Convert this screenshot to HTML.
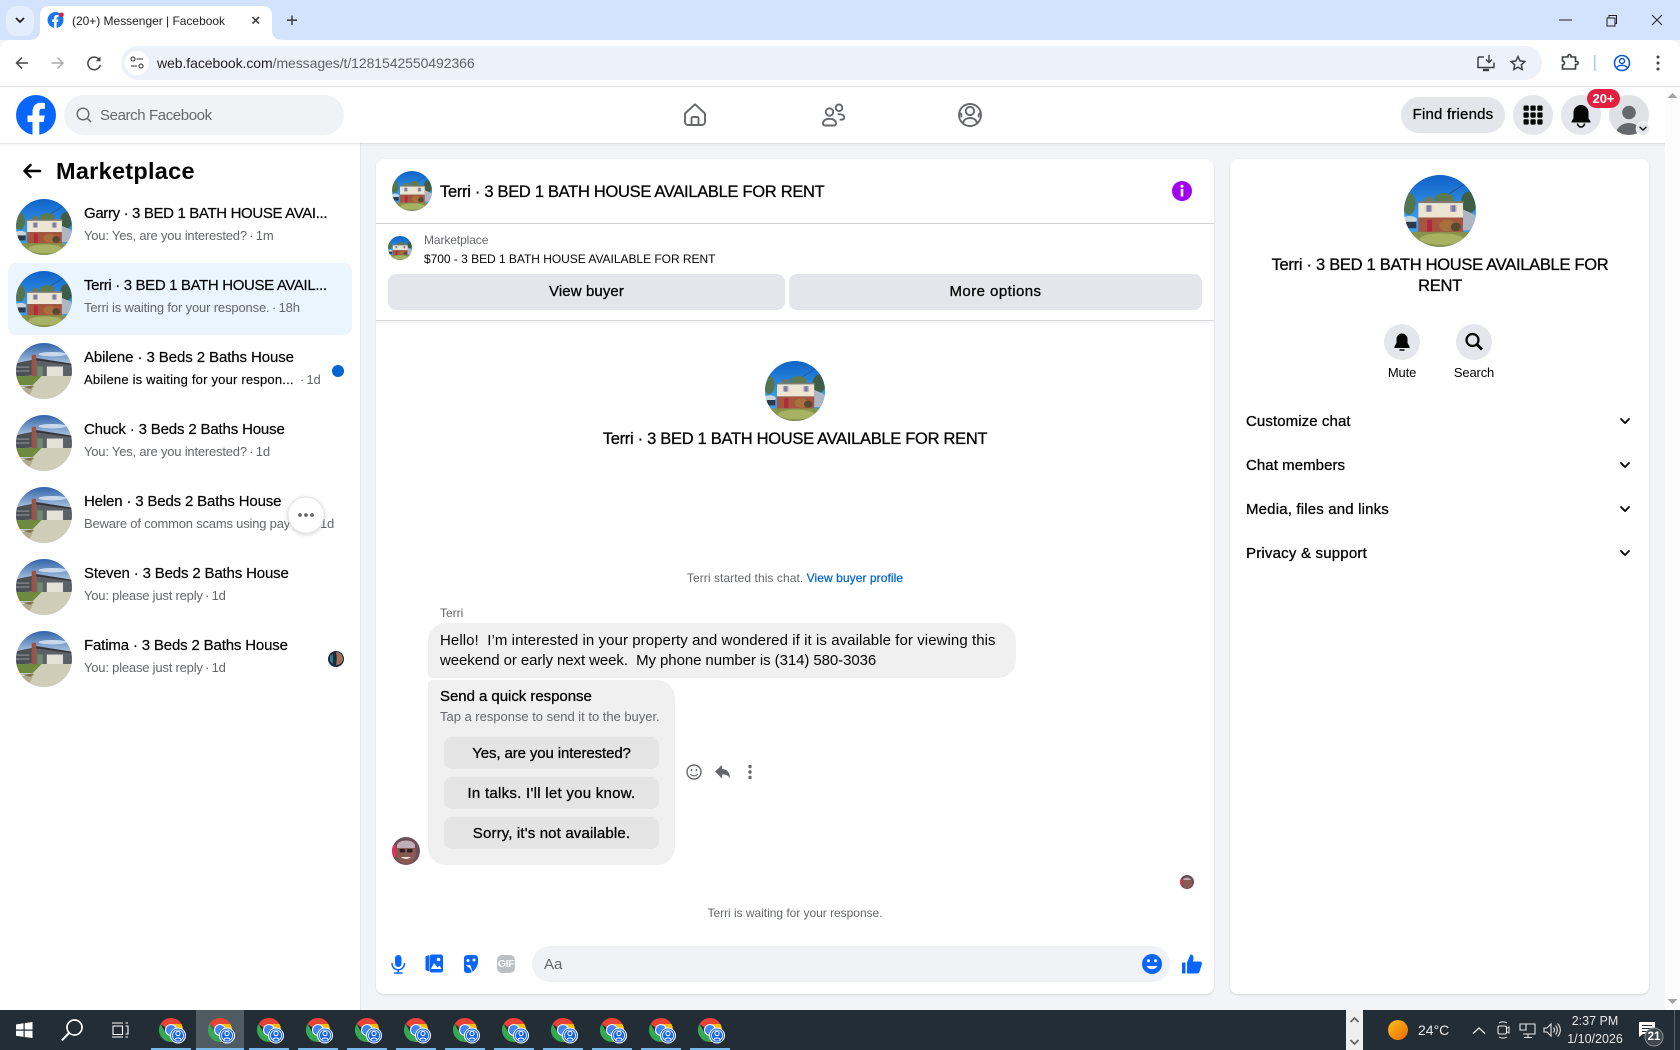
<!DOCTYPE html>
<html lang="en"><head><meta charset="utf-8"><title>(20+) Messenger | Facebook</title>
<style>
*{box-sizing:border-box}
html,body{margin:0;padding:0;width:1680px;height:1050px;overflow:hidden;background:#f2f4f7;font-family:"Liberation Sans",Arial,sans-serif;color:#050505}
svg.bg{position:absolute;left:0;top:0}
.t{position:absolute;white-space:nowrap;line-height:20px}
.c{transform:translateX(-50%)}
.g{color:#65676b}
.a{font-size:15px;letter-spacing:-.16px;-webkit-text-stroke:.2px currentColor}
.s{font-size:13px;letter-spacing:-.2px;color:#65676b}
.h{font-size:16.5px;letter-spacing:-.3px;-webkit-text-stroke:.3px currentColor}
.b{font-size:15px;letter-spacing:.1px;-webkit-text-stroke:.3px currentColor}
.x{font-size:15px}
</style></head><body>
<svg class="bg" width="1680" height="1050" viewBox="0 0 1680 1050" xmlns="http://www.w3.org/2000/svg">
<defs>
<clipPath id="cc"><circle cx="50" cy="50" r="50"/></clipPath>
<linearGradient id="sky1" x1="0" y1="0" x2="0" y2="1"><stop offset="0" stop-color="#0f62c8"/><stop offset=".6" stop-color="#3a9dea"/></linearGradient>
<linearGradient id="sky2" x1="0" y1="0" x2="0" y2="1"><stop offset="0" stop-color="#2f62a8"/><stop offset=".4" stop-color="#b4cbe4"/></linearGradient>
<linearGradient id="sun" x1="0" y1="0" x2="1" y2="1"><stop offset="0" stop-color="#ffc01e"/><stop offset="1" stop-color="#e86a00"/></linearGradient>
<symbol id="h1" viewBox="0 0 100 100"><g clip-path="url(#cc)">
<rect width="100" height="100" fill="url(#sky1)"/>
<path d="M60 28 85 12" stroke="#17396c" stroke-width=".8"/>
<ellipse cx="7" cy="40" rx="9" ry="15" fill="#55754e"/><ellipse cx="90" cy="38" rx="11" ry="15" fill="#3f5e48"/><ellipse cx="56" cy="33" rx="13" ry="8" fill="#5a7a50"/><ellipse cx="35" cy="34" rx="6" ry="4" fill="#6a7a60"/>
<path d="M20 39H84L82 36H22Z" fill="#7d7a70"/>
<rect x="20" y="39" width="62" height="20" fill="#ece5d2"/>
<rect x="30" y="42" width="9" height="9" fill="#c79fb4"/><rect x="32" y="42" width="5" height="9" fill="#6f7fa4"/>
<rect x="64" y="42" width="9" height="9" fill="#c79fb4"/><rect x="66" y="42" width="5" height="9" fill="#6f7fa4"/>
<rect x="20" y="59" width="62" height="21" fill="#a6563f"/>
<rect x="32" y="62" width="7" height="17" fill="#b3283e"/>
<path d="M82 48 98 55 100 76 82 77Z" fill="#aeb6c4"/>
<ellipse cx="8" cy="62" rx="10" ry="5" fill="#cbd6da"/><rect x="3" y="65" width="14" height="9" fill="#2e3a4a"/>
<ellipse cx="60" cy="70" rx="11" ry="8" fill="#a8703c"/><ellipse cx="72" cy="72" rx="7" ry="6" fill="#574a33"/>
<rect y="79" width="100" height="21" fill="#87934c"/><ellipse cx="52" cy="89" rx="30" ry="8" fill="#a7b263"/>
</g></symbol>
<symbol id="h2" viewBox="0 0 100 100"><g clip-path="url(#cc)">
<rect width="100" height="100" fill="url(#sky2)"/>
<ellipse cx="65" cy="20" rx="25" ry="4" fill="#c9d9ec"/>
<path d="M0 36 30 30V58L0 60Z" fill="#4b5055"/>
<path d="M36 27 100 37V60H36Z" fill="#5c6166"/><path d="M36 27 100 37V40L36 31Z" fill="#33373b"/>
<rect x="28" y="21" width="8" height="38" fill="#9a5448"/>
<rect x="38" y="42" width="10" height="17" fill="#6f8c72"/>
<rect x="55" y="42" width="29" height="17" fill="#e4e2d8"/>
<rect x="0" y="42" width="24" height="2" fill="#8d9296"/><rect x="0" y="49" width="24" height="2" fill="#8d9296"/>
<path d="M0 59H46L30 75H0Z" fill="#6d8a3e"/>
<path d="M46 59H100V100H0V78L30 75Z" fill="#cfccb7"/>
<path d="M0 82 32 78 20 100H0Z" fill="#b4ac90"/><path d="M12 78 32 76 26 82Z" fill="#7d7350"/>
</g></symbol>
<symbol id="cr" viewBox="0 0 30 26">
<path d="M12 0A12 12 0 0 1 22.4 6H12A6 6 0 0 0 6.5 9.6L1.6 6A12 12 0 0 1 12 0Z" fill="#ea4335"/>
<path d="M22.4 6A12 12 0 0 1 12 24L17.2 15A6 6 0 0 0 12 6Z" fill="#fbbc04"/>
<path d="M1.6 6 6.8 15A6 6 0 0 0 17.2 15L12 24A12 12 0 0 1 1.6 6Z" fill="#34a853"/>
<circle cx="12" cy="12" r="6" fill="#fff"/><circle cx="12" cy="12" r="5" fill="#4285f4"/>
<circle cx="19" cy="17.5" r="8" fill="#fff"/><circle cx="19" cy="17.5" r="7" fill="#1a66e0"/>
<circle cx="19" cy="17.5" r="5.6" fill="none" stroke="#dbe8fb" stroke-width=".9"/>
<circle cx="19" cy="15.5" r="2.1" fill="none" stroke="#fff" stroke-width="1"/><path d="M15.8 21.6a3.4 2.4 0 0 1 6.4 0" fill="none" stroke="#fff" stroke-width="1"/>
</symbol>
<symbol id="chv" viewBox="0 0 12 12"><path d="M2 4 6 8 10 4" fill="none" stroke="#050505" stroke-width="1.8" stroke-linecap="round" stroke-linejoin="round"/></symbol>
</defs>

<!-- browser chrome -->
<rect width="1680" height="40" fill="#d3e3fd"/>
<rect x="6" y="6" width="28" height="30" rx="10" fill="#e3edfc"/>
<path d="M16 18 20 22 24 18" fill="none" stroke="#1f1f1f" stroke-width="1.800"/>
<path d="M0 50V50A10 10 0 0 1 10 40H1670A10 10 0 0 1 1680 50V87H0Z" fill="#fff"/>
<path d="M28 40Q40 40 40 30V16Q40 6 50 6H262Q272 6 272 16V30Q272 40 284 40Z" fill="#fff"/>
<circle cx="55.500" cy="20" r="8" fill="#1877f2"/>
<path d="M54 28V22H52V19.500H54V18C54 16 55.200 15 57 15H58.500V17.300H57.500C56.800 17.300 56.600 17.700 56.600 18.300V19.500H58.500L58.100 22H56.600V28Z" fill="#fff"/>
<circle cx="61.500" cy="14.800" r="2.300" fill="#e41e3f"/>
<path d="M252.500 17 259 23.500M259 17 252.500 23.500" stroke="#3c4043" stroke-width="1.600"/>
<path d="M292 15.500V25M287 20.200H297" stroke="#444" stroke-width="1.600"/>
<path d="M1559 20H1572" stroke="#222" stroke-width="1"/>
<path d="M1607 18H1615V26H1607ZM1609 18V15.500H1616.500V23.500H1615" fill="none" stroke="#222" stroke-width="1"/>
<path d="M1652 15 1662 25M1662 15 1652 25" stroke="#222" stroke-width="1"/>
<path d="M16.500 63H28M22 57.500 16.500 63 22 68.500" fill="none" stroke="#444746" stroke-width="1.500"/>
<path d="M51.500 63H63M57.500 57.500 63 63 57.500 68.500" fill="none" stroke="#a9abae" stroke-width="1.500"/>
<path d="M99.500 60A6.300 6.300 0 1 0 100.300 65" fill="none" stroke="#444746" stroke-width="1.500"/><path d="M100.500 56.500V61.300H95.700Z" fill="#444746"/>
<rect x="121" y="46" width="1421" height="34" rx="17" fill="#edf2fa"/>
<circle cx="137" cy="63" r="12" fill="#fff"/>
<circle cx="133" cy="59" r="2" fill="none" stroke="#333" stroke-width="1.100"/><path d="M136.500 59H143M131 66H137" stroke="#333" stroke-width="1.100"/><circle cx="141" cy="66" r="2" fill="none" stroke="#333" stroke-width="1.100"/>
<path d="M1484 57H1479A1.500 1.500 0 0 0 1478 58.500V67.500H1494V62.500" fill="none" stroke="#3c4043" stroke-width="1.500"/><path d="M1483 70H1489" stroke="#3c4043" stroke-width="2.400"/><path d="M1489 55V62M1486 59.500 1489 62.500 1492 59.500" fill="none" stroke="#3c4043" stroke-width="1.400"/>
<path d="M1518 56.500 1520 60.900 1524.800 61.500 1521.300 64.800 1522.200 69.500 1518 67.200 1513.800 69.500 1514.700 64.800 1511.200 61.500 1516 60.900Z" fill="none" stroke="#3c4043" stroke-width="1.500"/>
<path d="M1562.500 57H1568V55.500A1.700 1.700 0 0 1 1571 55.500V57H1575.500V61.500H1577.200A1.700 1.700 0 0 1 1577.200 64.500H1575.500V69H1562.500V65A1.800 1.800 0 0 0 1562.500 61Z" fill="none" stroke="#3c4043" stroke-width="1.600"/>
<rect x="1594" y="55" width="1.500" height="16" fill="#a8c7fa"/>
<circle cx="1622" cy="63" r="7.500" fill="none" stroke="#0b57d0" stroke-width="1.600"/><circle cx="1622" cy="61" r="2.500" fill="none" stroke="#0b57d0" stroke-width="1.400"/><path d="M1616.500 68A6 4.500 0 0 1 1627.500 68" fill="none" stroke="#0b57d0" stroke-width="1.400"/>
<circle cx="1658" cy="57" r="1.500" fill="#444"/><circle cx="1658" cy="63" r="1.500" fill="#444"/><circle cx="1658" cy="69" r="1.500" fill="#444"/>
<rect y="86" width="1680" height="1" fill="#dfe1e4"/>

<!-- page -->
<rect y="87" width="1680" height="923" fill="#f2f4f7"/>
<rect x="1665" y="87" width="15" height="923" fill="#fcfcfc"/>
<path d="M1672.500 93 1677.500 98H1667.500Z" fill="#a3a3a3"/>
<path d="M1672.500 1004 1677.500 999H1667.500Z" fill="#a3a3a3"/>

<rect y="143" width="361" height="867" fill="#fff"/><rect x="360" y="143" width="1" height="867" fill="#e4e6eb"/>
<rect y="143" width="1665" height="3" fill="#000" opacity=".03"/><rect y="143" width="1665" height="1" fill="#000" opacity=".06"/>
<rect y="87" width="1665" height="56" fill="#fff"/>

<!-- FB logo -->
<circle cx="36" cy="115" r="20" fill="#0866ff"/>
<path d="M32.500 135V122H27.500V115.500H32.500V112.300C32.500 106 35.700 102.800 41 102.800C42.500 102.800 43.800 103 44.900 103.100V108.700H42.300C40 108.700 39.300 110 39.300 112.200V115.500H44.700L43.700 122H39.300V135Z" fill="#fff"/>
<rect x="64" y="95" width="280" height="40" rx="20" fill="#f0f2f5"/>
<circle cx="83" cy="114" r="5.800" fill="none" stroke="#65676b" stroke-width="1.400"/><path d="M87.500 118.500 91 122" stroke="#65676b" stroke-width="1.500"/>

<!-- nav icons -->
<g fill="none" stroke="#65676b" stroke-width="1.900" stroke-linejoin="round" stroke-linecap="round">
<path d="M685 113.500 695 104.300 705 113.500V122A3 3 0 0 1 702 125H688A3 3 0 0 1 685 122Z"/>
<path d="M691.500 125V118.500A1.500 1.500 0 0 1 693 117H697A1.500 1.500 0 0 1 698.500 118.500V125"/>
<circle cx="839" cy="107.800" r="3.300"/><circle cx="829.500" cy="112" r="3.700"/>
<path d="M825 125.500A2 2 0 0 1 823 123C823.500 120 826 118.800 829.500 118.800C833 118.800 835.500 120 836 123A2 2 0 0 1 834 125.500Z"/>
<path d="M838.500 114.200C841.500 114 844.300 115.300 844.300 117.500C844.300 119.500 842.500 119.700 840.500 119.700"/>
<circle cx="970" cy="115" r="11"/><circle cx="970" cy="111" r="4.200"/>
<path d="M963.300 122.500C963.800 119.500 966.500 118 970 118C973.500 118 976.200 119.500 976.700 122.500"/>
<path d="M959.500 113C961 113.500 961.600 114.500 961.300 116.500M980.500 113C979 113.500 978.400 114.500 978.700 116.500"/>
</g>
<rect x="1401" y="97" width="104" height="36" rx="18" fill="#e4e6eb"/>
<circle cx="1533" cy="115" r="20" fill="#e4e6eb"/>
<g fill="#050505"><rect x="1523.500" y="105.500" width="5.300" height="5.300" rx="1.200"/><rect x="1530.400" y="105.500" width="5.300" height="5.300" rx="1.200"/><rect x="1537.300" y="105.500" width="5.300" height="5.300" rx="1.200"/><rect x="1523.500" y="112.400" width="5.300" height="5.300" rx="1.200"/><rect x="1530.400" y="112.400" width="5.300" height="5.300" rx="1.200"/><rect x="1537.300" y="112.400" width="5.300" height="5.300" rx="1.200"/><rect x="1523.500" y="119.300" width="5.300" height="5.300" rx="1.200"/><rect x="1530.400" y="119.300" width="5.300" height="5.300" rx="1.200"/><rect x="1537.300" y="119.300" width="5.300" height="5.300" rx="1.200"/></g>
<circle cx="1581" cy="115" r="20" fill="#e4e6eb"/>
<path d="M1581 105A7.500 7.500 0 0 0 1573.500 112.500V118L1571.500 121.500V122.500H1590.500V121.500L1588.500 118V112.500A7.500 7.500 0 0 0 1581 105Z" fill="#050505"/><path d="M1577.500 123.500A3.500 3.500 0 0 0 1584.500 123.500" fill="none" stroke="#050505" stroke-width="1.600"/>
<circle cx="1629" cy="115" r="20" fill="#dfe1e5"/>
<clipPath id="pa"><circle cx="1629" cy="115" r="20"/></clipPath>
<g clip-path="url(#pa)" fill="#65686c"><circle cx="1629" cy="112.500" r="6.800"/><ellipse cx="1629" cy="134" rx="13" ry="11"/></g>
<circle cx="1643" cy="128.700" r="6.800" fill="#e4e6eb" stroke="#fff" stroke-width="1"/>
<use href="#chv" x="1638.500" y="124.200" width="9" height="9"/>
<rect x="1587" y="89" width="33" height="19" rx="9.500" fill="#e41e3f"/>

<!-- sidebar -->
<path d="M25 171H40M30.500 165 24.500 171 30.500 177" fill="none" stroke="#050505" stroke-width="2.600" stroke-linejoin="round" stroke-linecap="round"/>
<rect x="8" y="263" width="344" height="72" rx="8" fill="#ebf5ff"/>
<use href="#h1" x="16" y="199" width="56" height="56"/>
<use href="#h1" x="16" y="271" width="56" height="56"/>
<use href="#h2" x="16" y="343" width="56" height="56"/>
<use href="#h2" x="16" y="415" width="56" height="56"/>
<use href="#h2" x="16" y="487" width="56" height="56"/>
<use href="#h2" x="16" y="559" width="56" height="56"/>
<use href="#h2" x="16" y="631" width="56" height="56"/>
<circle cx="338" cy="371" r="6" fill="#0064d1"/>
<circle cx="336" cy="659" r="8" fill="#1c2c3e"/><path d="M336 652C340 652 343 655 343 660C341 664 339 665 336 665C337 661 337 656 336 652Z" fill="#a86f58"/><path d="M330 656 333 654 333 664 330 661Z" fill="#2d7f8d"/>

<!-- mid card -->
<rect x="376" y="159" width="838" height="835" rx="8" fill="#fff" filter="drop-shadow(0 1px 1px rgba(0,0,0,.12))"/>
<rect x="376" y="223" width="838" height="1" fill="#ced0d4"/>
<rect x="376" y="320" width="838" height="1" fill="#d5d7db"/><rect x="376" y="321" width="838" height="2" fill="#000" opacity=".03"/>
<use href="#h1" x="392" y="171" width="40" height="40"/>
<circle cx="1182" cy="191" r="10" fill="#a200f2"/><circle cx="1182" cy="186.300" r="1.500" fill="#fff"/><rect x="1180.700" y="189" width="2.600" height="7.500" fill="#fff"/>
<use href="#h1" x="388" y="236" width="24" height="24"/>
<rect x="388" y="274" width="397" height="36" rx="8" fill="#e4e6eb"/>
<rect x="789" y="274" width="413" height="36" rx="8" fill="#e4e6eb"/>
<use href="#h1" x="765" y="361" width="60" height="60"/>

<path d="M446 623H998A18 18 0 0 1 1016 641V660A18 18 0 0 1 998 678H432A4 4 0 0 1 428 674V641A18 18 0 0 1 446 623Z" fill="#f0f0f0"/>
<path d="M432 680H657A18 18 0 0 1 675 698V847A18 18 0 0 1 657 865H446A18 18 0 0 1 428 847V684A4 4 0 0 1 432 680Z" fill="#f0f0f0"/>
<rect x="444" y="737" width="215" height="32" rx="8" fill="#e4e4e4"/>
<rect x="444" y="777" width="215" height="32" rx="8" fill="#e4e4e4"/>
<rect x="444" y="817" width="215" height="32" rx="8" fill="#e4e4e4"/>

<clipPath id="ta"><circle cx="406" cy="851" r="14"/></clipPath>
<g clip-path="url(#ta)"><rect x="392" y="837" width="28" height="28" fill="#6a4f56"/><rect x="392" y="845" width="4" height="12" fill="#e03060"/><ellipse cx="406" cy="853" rx="10" ry="11" fill="#8a5a52"/><path d="M397 845C399 839 413 839 415 845V848H397Z" fill="#bfaeb5"/><rect x="399.500" y="849" width="5.500" height="3.500" rx="1" fill="#2a2224"/><rect x="407" y="849" width="5.500" height="3.500" rx="1" fill="#2a2224"/><path d="M401 857C403 859.500 409 859.500 411 857Z" fill="#f3e8e4"/></g>

<circle cx="694" cy="772" r="7" fill="none" stroke="#65676b" stroke-width="1.400"/><circle cx="691.500" cy="770" r="1" fill="#65676b"/><circle cx="696.500" cy="770" r="1" fill="#65676b"/><path d="M690.500 774C692 776.500 696 776.500 697.500 774" fill="none" stroke="#65676b" stroke-width="1.200"/>
<path d="M715 771.500 722 765V769C727 769 730 772.500 730 778.500C728.500 775.500 726 774.500 722 774.500V778.500Z" fill="#65676b"/>
<circle cx="750" cy="766.500" r="1.700" fill="#65676b"/><circle cx="750" cy="772" r="1.700" fill="#65676b"/><circle cx="750" cy="777.500" r="1.700" fill="#65676b"/>

<clipPath id="sa"><circle cx="1187" cy="882" r="7"/></clipPath>
<g clip-path="url(#sa)"><rect x="1180" y="875" width="14" height="14" fill="#6b4f56"/><rect x="1180" y="879" width="2" height="6" fill="#e03060"/><ellipse cx="1187" cy="883" rx="5" ry="5.500" fill="#8a5a52"/><path d="M1183 880C1184 877 1190 877 1191 880Z" fill="#bfaeb5"/></g>

<!-- composer -->
<rect x="532" y="946" width="638" height="36" rx="18" fill="#f0f2f5"/>
<rect x="395" y="955" width="6.500" height="12" rx="3.250" fill="#0866ff"/>
<path d="M392 963.500A6.200 6.200 0 0 0 404.500 963.500M398.200 970V973M394.500 973H402" fill="none" stroke="#0866ff" stroke-width="1.500" stroke-linecap="round"/>
<path d="M425.500 956.500 429 955V971.500L425.500 970Z" fill="#0866ff"/>
<rect x="429.500" y="954.500" width="13.500" height="18" rx="2.200" fill="#0866ff"/>
<circle cx="438.500" cy="959.500" r="1.800" fill="#fff"/><path d="M431 969 434 963 437.500 967.500 439.500 965.500 441.500 969Z" fill="#fff"/>
<path d="M464 958C464 956 466 955 468 955H474C477 955 478 956.500 478 958.500V962C478 967 473 973 469 973H467C465 973 464 971.500 464 970Z" fill="#0866ff"/>
<circle cx="468" cy="960.500" r="1.500" fill="#fff"/><circle cx="474" cy="960" r="1.500" fill="#fff"/><path d="M467 965.500C469 967.500 471 967 472.500 973L470 965.500Z" fill="#fff" stroke="#fff" stroke-width=".8"/>
<rect x="497" y="955" width="18" height="18" rx="5" fill="#bcc0c4"/>
<circle cx="1152" cy="964" r="10" fill="#0866ff"/><circle cx="1148.500" cy="960.800" r="1.500" fill="#fff"/><circle cx="1155.500" cy="960.800" r="1.500" fill="#fff"/><path d="M1146.500 966C1148.500 970 1155.500 970 1157.500 966Z" fill="#fff"/>
<path d="M1182 962.500H1185.500V973.500H1182ZM1187 962.500 1190.500 954.500C1192.500 954.500 1193.800 956 1193.500 958.500L1193 961.500H1200C1201.500 961.500 1202.300 963 1201.800 964.500L1199.500 971.800C1199.200 972.800 1198.300 973.500 1197.300 973.500H1187Z" fill="#0866ff"/>

<!-- right card -->
<rect x="1230" y="159" width="419" height="835" rx="8" fill="#fff" filter="drop-shadow(0 1px 1px rgba(0,0,0,.12))"/>
<use href="#h1" x="1404" y="175" width="72" height="72"/>
<circle cx="1402" cy="342" r="18" fill="#e4e6eb"/><circle cx="1474" cy="342" r="18" fill="#e4e6eb"/>
<path d="M1402 333.500A5.500 5.500 0 0 0 1396.500 339V343L1394.500 346.500V348H1409.500V346.500L1407.500 343V339A5.500 5.500 0 0 0 1402 333.500Z" fill="#050505"/><path d="M1399.500 350H1404.500" stroke="#050505" stroke-width="1.500"/>
<circle cx="1472.500" cy="340" r="6" fill="none" stroke="#050505" stroke-width="2.200"/><path d="M1477 344.500 1482 349.500" stroke="#050505" stroke-width="2.800"/>
<use href="#chv" x="1619" y="415" width="12" height="12"/>
<use href="#chv" x="1619" y="459" width="12" height="12"/>
<use href="#chv" x="1619" y="503" width="12" height="12"/>
<use href="#chv" x="1619" y="547" width="12" height="12"/>
</svg>

<!-- chrome text -->
<div class="t" style="left:72px;top:11px;font-size:12px;color:#1f1f1f;letter-spacing:-.02px">(20+) Messenger | Facebook</div>
<div class="t" style="left:157px;top:53px;font-size:14px;color:#5f6368;letter-spacing:-.07px"><span style="color:#1f1f1f">web.facebook.com</span>/messages/t/1281542550492366</div>

<!-- nav text -->
<div class="t g" style="left:100px;top:106px;font-size:15px;letter-spacing:-.39px">Search Facebook</div>
<div class="t b c" style="left:1453px;top:105px;letter-spacing:.2px">Find friends</div>

<!-- sidebar text -->
<div class="t" style="left:56px;top:158px;font-size:23.5px;font-weight:700;line-height:26px;letter-spacing:.27px">Marketplace</div>
<div class="t a" style="left:84px;top:204px;letter-spacing:-.35px">Garry · 3 BED 1 BATH HOUSE AVAI...</div>
<div class="t s" style="left:84px;top:226px">You: Yes, are you interested?&#8201;·&#8201;1m</div>
<div class="t a" style="left:84px;top:276px;letter-spacing:-.35px">Terri · 3 BED 1 BATH HOUSE AVAIL...</div>
<div class="t s" style="left:84px;top:298px;letter-spacing:-.15px">Terri is waiting for your response.&#8201;·&#8201;18h</div>
<div class="t a" style="left:84px;top:348px;letter-spacing:-.09px">Abilene · 3 Beds 2 Baths House</div>
<div class="t s" style="left:84px;top:370px;color:#050505;letter-spacing:.2px;-webkit-text-stroke:.15px #050505">Abilene is waiting for your respon...</div>
<div class="t s" style="left:300px;top:370px">·&#8201;1d</div>
<div class="t a" style="left:84px;top:420px">Chuck · 3 Beds 2 Baths House</div>
<div class="t s" style="left:84px;top:442px">You: Yes, are you interested?&#8201;·&#8201;1d</div>
<div class="t a" style="left:84px;top:492px">Helen · 3 Beds 2 Baths House</div>
<div class="t s" style="left:84px;top:514px">Beware of common scams using pay</div>
<div class="t s" style="left:320px;top:514px">1d</div>
<div class="t a" style="left:84px;top:564px">Steven · 3 Beds 2 Baths House</div>
<div class="t s" style="left:84px;top:586px">You: please just reply&#8201;·&#8201;1d</div>
<div class="t a" style="left:84px;top:636px">Fatima · 3 Beds 2 Baths House</div>
<div class="t s" style="left:84px;top:658px">You: please just reply&#8201;·&#8201;1d</div>

<!-- hover more button above text -->
<svg class="bg" width="1680" height="1050" viewBox="0 0 1680 1050" style="pointer-events:none" xmlns="http://www.w3.org/2000/svg">
<circle cx="306" cy="515" r="18" fill="#fff" stroke="#e4e6eb" stroke-width="1" filter="drop-shadow(0 1px 2px rgba(0,0,0,.18))"/>
<circle cx="300" cy="515" r="1.900" fill="#65676b"/><circle cx="306" cy="515" r="1.900" fill="#65676b"/><circle cx="312" cy="515" r="1.900" fill="#65676b"/>
</svg>

<!-- middle text -->
<div class="t h" style="left:440px;top:182px">Terri · 3 BED 1 BATH HOUSE AVAILABLE FOR RENT</div>
<div class="t g" style="left:424px;top:230px;font-size:12px;letter-spacing:-.1px">Marketplace</div>
<div class="t" style="left:424px;top:249px;font-size:12px;letter-spacing:-.03px">$700 - 3 BED 1 BATH HOUSE AVAILABLE FOR RENT</div>
<div class="t b c" style="left:586.500px;top:282px">View buyer</div>
<div class="t b c" style="left:995.500px;top:282px;letter-spacing:.44px">More options</div>
<div class="t h c" style="left:795px;top:429px">Terri · 3 BED 1 BATH HOUSE AVAILABLE FOR RENT</div>
<div class="t g c" style="left:795px;top:568px;font-size:12px;letter-spacing:.07px">Terri started this chat. <span style="color:#0064d1;-webkit-text-stroke:.25px #0064d1">View buyer profile</span></div>
<div class="t g" style="left:440px;top:603px;font-size:12px">Terri</div>
<div class="t x" style="left:440px;top:631px;letter-spacing:.07px">Hello!&nbsp; I’m interested in your property and wondered if it is available for viewing this</div>
<div class="t x" style="left:440px;top:651px;letter-spacing:-.08px">weekend or early next week.&nbsp; My phone number is (314) 580-3036</div>
<div class="t b" style="left:440px;top:687px;letter-spacing:-.04px">Send a quick response</div>
<div class="t s" style="left:440px;top:707px;letter-spacing:-.02px">Tap a response to send it to the buyer.</div>
<div class="t b c" style="left:551.500px;top:744px;letter-spacing:-.11px">Yes, are you interested?</div>
<div class="t b c" style="left:551.500px;top:784px;letter-spacing:.27px">In talks. I'll let you know.</div>
<div class="t b c" style="left:551.500px;top:824px;letter-spacing:.15px">Sorry, it's not available.</div>
<div class="t g c" style="left:795px;top:903px;font-size:12px;letter-spacing:-.03px">Terri is waiting for your response.</div>
<div class="t g" style="left:544px;top:955px;font-size:15px">Aa</div>
<div class="t c" style="left:506px;top:954px;font-size:10.500px;font-weight:700;color:#fff;letter-spacing:-.3px">GIF</div>

<!-- right text -->
<div class="t h c" style="left:1440px;top:255px;letter-spacing:-.29px">Terri · 3 BED 1 BATH HOUSE AVAILABLE FOR</div>
<div class="t h c" style="left:1440px;top:276px">RENT</div>
<div class="t c" style="left:1402px;top:363px;font-size:13px;letter-spacing:-.15px">Mute</div>
<div class="t c" style="left:1474px;top:363px;font-size:13px;letter-spacing:-.15px">Search</div>
<div class="t b" style="left:1246px;top:412px;letter-spacing:.09px">Customize chat</div>
<div class="t b" style="left:1246px;top:456px;letter-spacing:.06px">Chat members</div>
<div class="t b" style="left:1246px;top:500px;letter-spacing:.17px">Media, files and links</div>
<div class="t b" style="left:1246px;top:544px;letter-spacing:.2px">Privacy &amp; support</div>
<div class="t c" style="left:1603.500px;top:89px;font-size:13px;font-weight:700;line-height:19px;color:#fff">20+</div>

<!-- taskbar -->
<svg class="bg" width="1680" height="40" viewBox="0 1010 1680 40" style="top:1010px" xmlns="http://www.w3.org/2000/svg">
<rect y="1010" width="1680" height="40" fill="#222d35"/>
<rect x="196" y="1010" width="48" height="40" fill="#4f5c62"/>
<rect x="1346" y="1010" width="17" height="40" fill="#efefef"/>
<path d="M16 1024.500 23.500 1023.300V1029.500H16ZM24.700 1023.100 32.500 1022V1029.500H24.700ZM16 1030.700H23.500V1036.900L16 1035.700ZM24.700 1030.700H32.500V1038L24.700 1037Z" fill="#fff"/>
<circle cx="74.500" cy="1027.500" r="7.500" fill="none" stroke="#fff" stroke-width="1.700"/><path d="M69 1033 61.800 1040.500" stroke="#fff" stroke-width="2"/>
<path d="M113 1026H122.500V1034.500H113ZM112 1023H123M112 1037H123M125.500 1023H128M125.500 1026H128V1034H125.500M125.500 1037H128" fill="none" stroke="#fff" stroke-width="1.100"/>
<use href="#cr" x="159" y="1018" width="30" height="26"/>
<use href="#cr" x="208" y="1018" width="30" height="26"/>
<use href="#cr" x="257" y="1018" width="30" height="26"/>
<use href="#cr" x="306" y="1018" width="30" height="26"/>
<use href="#cr" x="355" y="1018" width="30" height="26"/>
<use href="#cr" x="404" y="1018" width="30" height="26"/>
<use href="#cr" x="453" y="1018" width="30" height="26"/>
<use href="#cr" x="502" y="1018" width="30" height="26"/>
<use href="#cr" x="551" y="1018" width="30" height="26"/>
<use href="#cr" x="600" y="1018" width="30" height="26"/>
<use href="#cr" x="649" y="1018" width="30" height="26"/>
<use href="#cr" x="698" y="1018" width="30" height="26"/>
<g fill="#76b9ed">
<rect x="151" y="1048" width="40" height="2"/><rect x="196" y="1048" width="48" height="2"/><rect x="249" y="1048" width="40" height="2"/><rect x="298" y="1048" width="40" height="2"/><rect x="347" y="1048" width="40" height="2"/><rect x="396" y="1048" width="40" height="2"/><rect x="445" y="1048" width="40" height="2"/><rect x="494" y="1048" width="40" height="2"/><rect x="543" y="1048" width="40" height="2"/><rect x="592" y="1048" width="40" height="2"/><rect x="641" y="1048" width="40" height="2"/><rect x="690" y="1048" width="40" height="2"/>
</g>
<path d="M1350.500 1022 1354.500 1018 1358.500 1022M1350.500 1040 1354.500 1044 1358.500 1040" fill="none" stroke="#666" stroke-width="1.800"/>
<circle cx="1398" cy="1030" r="10" fill="url(#sun)"/>
<path d="M1473 1033.500 1479 1028 1485 1033.500" fill="none" stroke="#e6e6e6" stroke-width="1.300"/>
<rect x="1498" y="1026" width="8.500" height="8" rx="1.500" fill="none" stroke="#e6e6e6" stroke-width="1.100"/><path d="M1506.500 1028.500 1509 1027V1033L1506.500 1031.500M1499 1023C1501 1021.500 1505 1021.500 1507 1023M1499 1037C1501 1038.500 1505 1038.500 1507 1037" fill="none" stroke="#e6e6e6" stroke-width="1"/>
<path d="M1520 1024H1535V1034H1523M1528 1034V1037M1524 1037.500H1532M1520 1024H1526V1030H1520Z" fill="none" stroke="#e6e6e6" stroke-width="1.100"/>
<path d="M1544 1028H1547L1551 1024V1036L1547 1032H1544ZM1553.500 1027.500A3.500 3.500 0 0 1 1553.500 1032.500M1555.500 1025.500A6.500 6.500 0 0 1 1555.500 1034.500M1557.500 1023.500A9 9 0 0 1 1557.500 1036.500" fill="none" stroke="#e6e6e6" stroke-width="1.100"/>
<path d="M1639 1022H1655V1034H1643L1639 1037Z" fill="#fff"/><path d="M1642 1025.500H1652M1642 1028.500H1652M1642 1031.500H1649" stroke="#222d35" stroke-width="1"/>
<circle cx="1654" cy="1037" r="9" fill="#3e474e" stroke="#8a9096" stroke-width="1"/>
<rect x="1674" y="1010" width="1" height="40" fill="#5a6369"/>
</svg>
<div class="t" style="left:1418px;top:1020px;font-size:14px;color:#e8e8e8">24°C</div>
<div class="t c" style="left:1595px;top:1011px;font-size:12.500px;color:#e8e8e8">2:37 PM</div>
<div class="t c" style="left:1595px;top:1029px;font-size:12.500px;color:#e8e8e8">1/10/2026</div>
<div class="t c" style="left:1654px;top:1027px;font-size:11.500px;font-weight:700;color:#fff">21</div>
</body></html>
